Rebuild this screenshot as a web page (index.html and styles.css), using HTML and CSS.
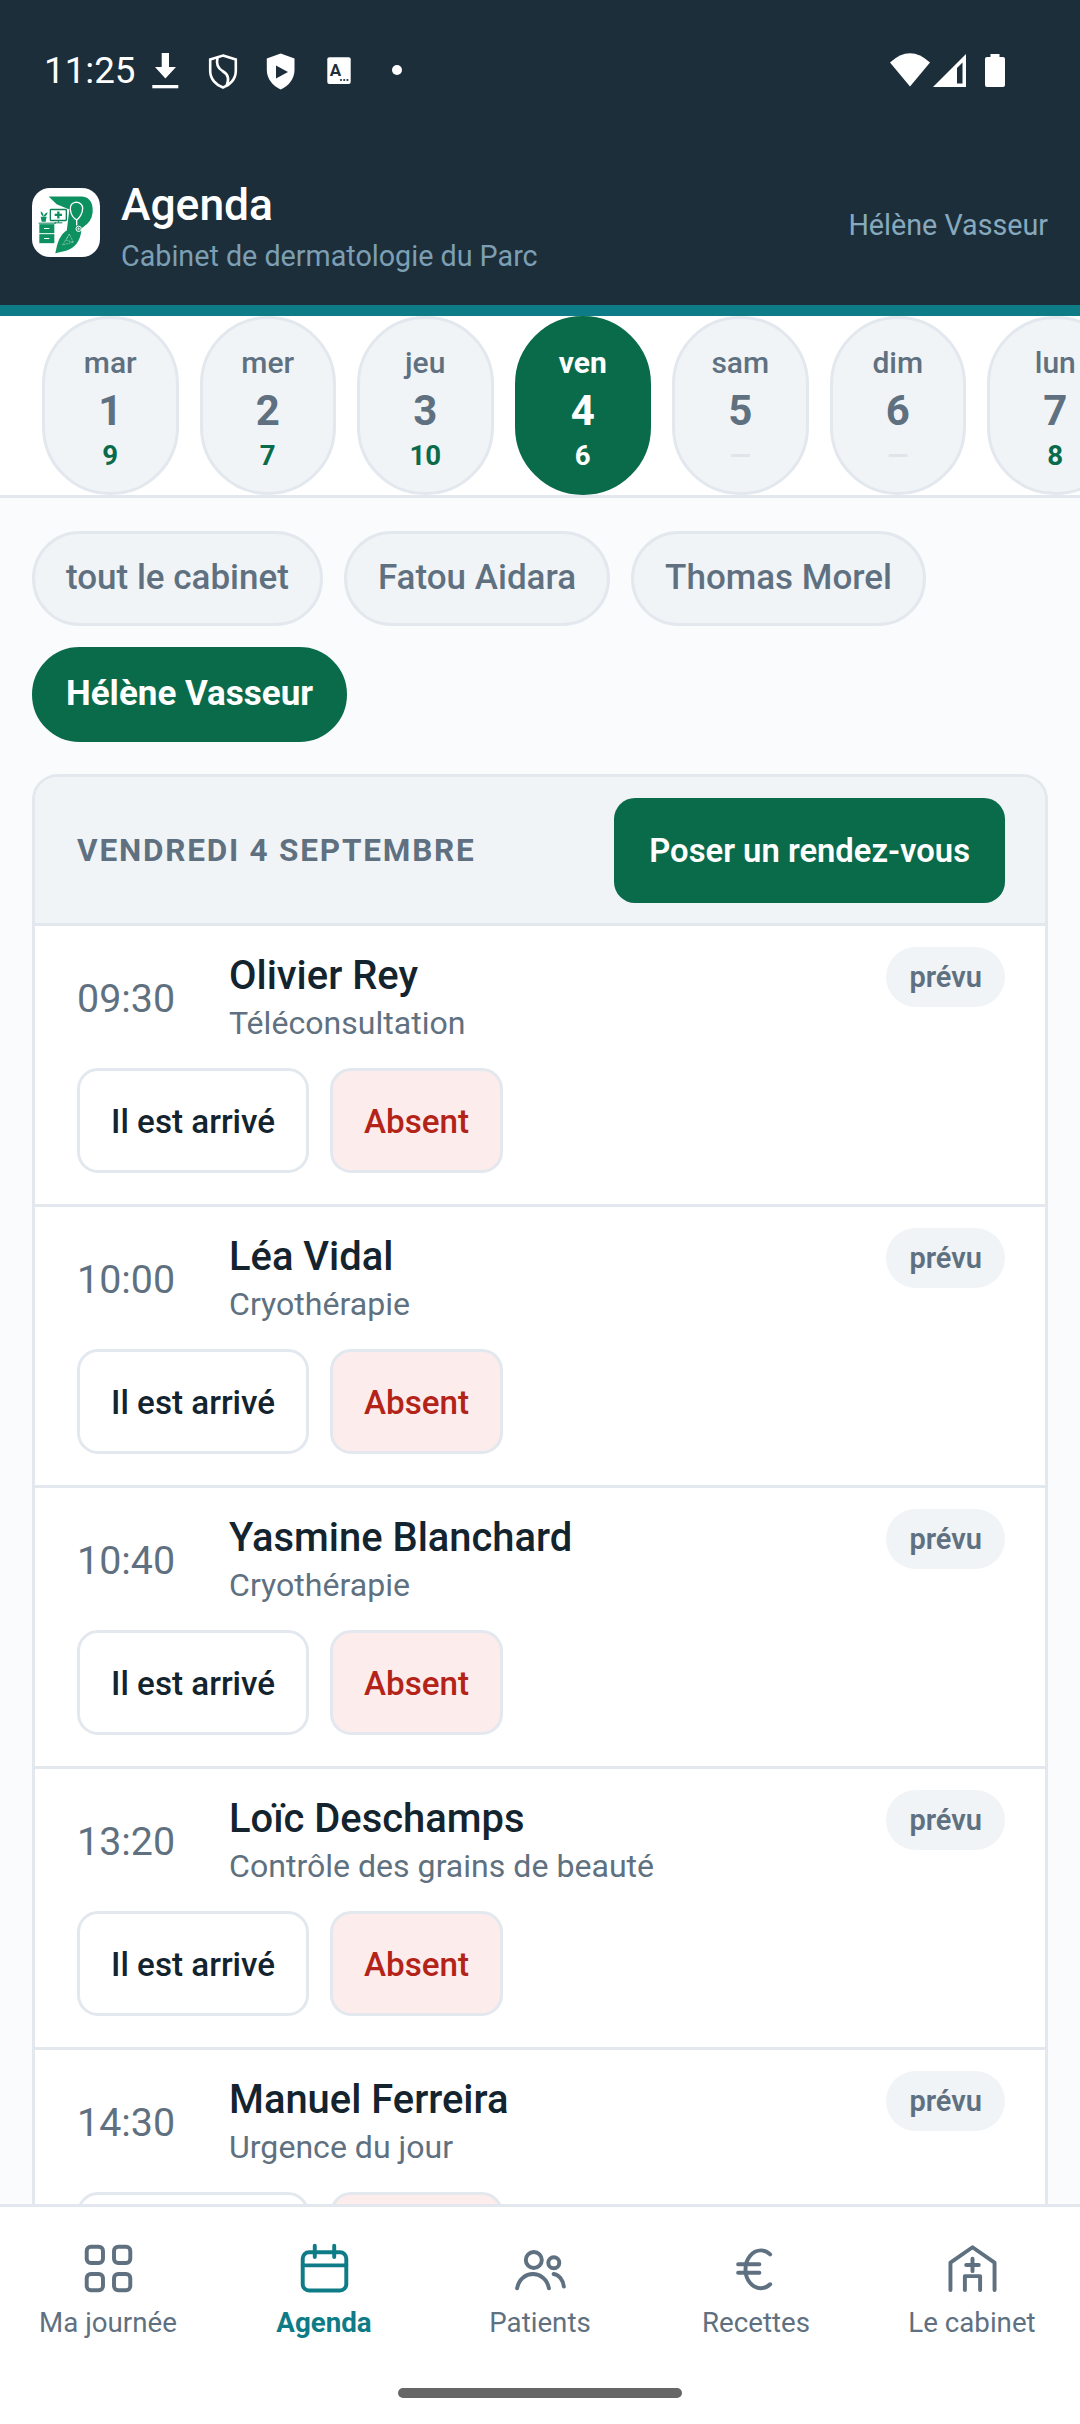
FILE: index.html
```html
<!DOCTYPE html>
<html lang="fr">
<head>
  <meta charset="UTF-8" />
  <meta name="viewport" content="width=device-width, initial-scale=1.0"/>
  <title>Agenda</title>
  <link rel="stylesheet" href="styles.css">
</head>
<body>
  <div class="app">

    <header class="top">
      <div class="status-bar">
        <span class="clock">11:25</span>
        <div class="status-icons">
          <svg class="st" viewBox="0 0 30 40" fill="#fff"><path d="M11.7 3H19V17H26L15.4 28.5 5 17H11.7Z"/><rect x="2.3" y="35" width="26" height="3.3"/></svg>
          <svg class="st" viewBox="0 0 30 40" fill="none" stroke="#fff" stroke-width="2.6"><path d="M15 5.500L27.800 9.500V21C27.800 29 22 35 15 37.500 8 35 2.200 29 2.200 21V9.500Z"/><path d="M9.500 8C8 14 9.500 18 14.500 21 20 24 21.500 29 18.500 36"/></svg>
          <svg class="st" viewBox="0 0 30 40"><path fill="#fff" d="M14.700 3.500L28.500 8.500V20C28.500 29 22.500 36 14.700 39.500 7 36 .8 29 .8 20V8.500Z"/><path fill="#1d2e3b" d="M10 15.500V28.500L22 22Z"/></svg>
          <svg class="st" viewBox="0 0 30 40"><rect x="3.300" y="7.300" width="23.400" height="26.700" rx="2" fill="#fff"/><text x="11.500" y="26" font-family="Roboto" font-weight="700" font-size="17" text-anchor="middle" fill="#1d2e3b">A</text><circle cx="17" cy="30" r="1.100" fill="#1d2e3b"/><circle cx="20.200" cy="30" r="1.100" fill="#1d2e3b"/><circle cx="23.400" cy="30" r="1.100" fill="#1d2e3b"/></svg>
          <svg class="st" viewBox="0 0 30 40"><circle cx="15" cy="20" r="5" fill="#fff"/></svg>
        </div>
        <div class="status-right">
          <svg class="wifi" viewBox="0 0 40 34"><path fill="#fff" d="M0 9.500Q20-9 40 9.500L20 33.500Z"/></svg>
          <svg class="signal" viewBox="0 0 33 33"><path fill="#fff" d="M0 33 33 0V33Z"/><path fill="#1d2e3b" d="M24 14 29.500 8.500V29.500H24Z"/></svg>
          <svg class="battery" viewBox="0 0 20 33"><path fill="#fff" d="M5.500 0H14.500V3H18Q20 3 20 5V31Q20 33 18 33H2Q0 33 0 31V5Q0 3 2 3H5.500Z"/></svg>
        </div>
      </div>
      <div class="app-bar">
        <div class="logo">
          <svg viewBox="38 40 204 206">
            <path fill="#0e9160" d="M88 65H188Q222 68 220 112 218 140 190 158L176 170H142L150 104 112 88Z"/>
            <path fill="#0e9160" d="M108 235Q116 184 140 168H186Q180 216 140 228Z"/>
            <rect x="60" y="148" width="45" height="27" fill="#0e9160"/>
            <rect x="60" y="178" width="45" height="27" fill="#0e9160"/>
            <path stroke="#fff" stroke-width="3" d="M74 161H90M74 191H90"/>
            <rect x="93" y="104" width="48" height="33" rx="2" fill="#fff" stroke="#0e8058" stroke-width="4"/>
            <path stroke="#0e9160" stroke-width="7" d="M117 110V131M106 120H128"/>
            <path stroke="#0e8058" stroke-width="3" d="M117 137V143M105 144H129M58 145H110"/>
            <path fill="#0e9160" d="M64 126H82L79 141H67Z"/>
            <path fill="#0e9160" d="M73 126C66 122 64 116 64 109 70 112 73 118 73 126ZM73 126C74 118 78 114 85 112 84 119 80 124 73 126Z"/>
            <path fill="#0e9160" stroke="#fff" stroke-width="4" d="M170 82C158 84 152 92 153 104 155 122 166 132 172 135 180 130 190 116 190 100 190 90 182 82 170 82Z"/>
            <path stroke="#fff" stroke-width="4" fill="none" d="M172 135V152"/>
            <circle cx="178" cy="162" r="8" fill="#0e9160" stroke="#fff" stroke-width="3"/>
            <path stroke="#fff" stroke-width="2" d="M178 157V167M173 162H183"/>
            <path stroke="#fff" stroke-width="1.500" fill="none" stroke-dasharray="3 2" d="M130 210 150 178 162 202 130 210M150 178 140 196 162 202"/>
          </svg>
        </div>
        <div class="brand">
          <div class="brand-title">Agenda</div>
          <div class="brand-sub">Cabinet de dermatologie du Parc</div>
        </div>
        <div class="user-name">Hélène Vasseur</div>
      </div>
    </header>

    <nav class="date-strip">
      <div class="date-pill"><span class="d-label">mar</span><span class="d-num">1</span><span class="d-count">9</span></div>
      <div class="date-pill"><span class="d-label">mer</span><span class="d-num">2</span><span class="d-count">7</span></div>
      <div class="date-pill"><span class="d-label">jeu</span><span class="d-num">3</span><span class="d-count">10</span></div>
      <div class="date-pill active"><span class="d-label">ven</span><span class="d-num">4</span><span class="d-count">6</span></div>
      <div class="date-pill"><span class="d-label">sam</span><span class="d-num">5</span><span class="d-count none">—</span></div>
      <div class="date-pill"><span class="d-label">dim</span><span class="d-num">6</span><span class="d-count none">—</span></div>
      <div class="date-pill"><span class="d-label">lun</span><span class="d-num">7</span><span class="d-count">8</span></div>
    </nav>

    <main class="content">
      <div class="chips">
        <button class="chip">tout le cabinet</button>
        <button class="chip">Fatou Aidara</button>
        <button class="chip">Thomas Morel</button>
        <button class="chip active">Hélène Vasseur</button>
      </div>

      <section class="day-card">
        <div class="day-head">
          <span class="day-title">VENDREDI 4 SEPTEMBRE</span>
          <button class="btn-book">Poser un rendez-vous</button>
        </div>

        <div class="appt">
          <div class="appt-top">
            <span class="appt-time">09:30</span>
            <div class="appt-info"><div class="appt-name">Olivier Rey</div><div class="appt-type">Téléconsultation</div></div>
            <span class="appt-status">prévu</span>
          </div>
          <div class="appt-actions"><button class="btn-arrived">Il est arrivé</button><button class="btn-absent">Absent</button></div>
        </div>

        <div class="appt">
          <div class="appt-top">
            <span class="appt-time">10:00</span>
            <div class="appt-info"><div class="appt-name">Léa Vidal</div><div class="appt-type">Cryothérapie</div></div>
            <span class="appt-status">prévu</span>
          </div>
          <div class="appt-actions"><button class="btn-arrived">Il est arrivé</button><button class="btn-absent">Absent</button></div>
        </div>

        <div class="appt">
          <div class="appt-top">
            <span class="appt-time">10:40</span>
            <div class="appt-info"><div class="appt-name">Yasmine Blanchard</div><div class="appt-type">Cryothérapie</div></div>
            <span class="appt-status">prévu</span>
          </div>
          <div class="appt-actions"><button class="btn-arrived">Il est arrivé</button><button class="btn-absent">Absent</button></div>
        </div>

        <div class="appt">
          <div class="appt-top">
            <span class="appt-time">13:20</span>
            <div class="appt-info"><div class="appt-name">Loïc Deschamps</div><div class="appt-type">Contrôle des grains de beauté</div></div>
            <span class="appt-status">prévu</span>
          </div>
          <div class="appt-actions"><button class="btn-arrived">Il est arrivé</button><button class="btn-absent">Absent</button></div>
        </div>

        <div class="appt">
          <div class="appt-top">
            <span class="appt-time">14:30</span>
            <div class="appt-info"><div class="appt-name">Manuel Ferreira</div><div class="appt-type">Urgence du jour</div></div>
            <span class="appt-status">prévu</span>
          </div>
          <div class="appt-actions"><button class="btn-arrived">Il est arrivé</button><button class="btn-absent">Absent</button></div>
        </div>
      </section>
    </main>

    <footer class="tabs">
      <div class="tab-row">
        <div class="tab">
          <svg class="tab-icon" viewBox="0 0 24 24"><rect x="3.700" y="3.700" width="6.200" height="6.200" rx="1.600"/><rect x="14.100" y="3.700" width="6.200" height="6.200" rx="1.600"/><rect x="3.700" y="14.100" width="6.200" height="6.200" rx="1.600"/><rect x="14.100" y="14.100" width="6.200" height="6.200" rx="1.600"/></svg>
          <span>Ma journée</span>
        </div>
        <div class="tab active">
          <svg class="tab-icon" viewBox="0 0 24 24"><rect x="3.700" y="5.800" width="16.600" height="14.600" rx="2.400"/><path d="M8.300 3.300V7.600M15.700 3.300V7.600M3.700 10.800H20.300"/></svg>
          <span>Agenda</span>
        </div>
        <div class="tab">
          <svg class="tab-icon" viewBox="0 0 24 24"><circle cx="9.450" cy="8.760" r="3.050"/><circle cx="17.070" cy="9.800" r="2.100"/><path d="M3.100 19.500C3.700 16 6.400 14.100 9.100 14.100S14.600 16 15.200 19.500M17 14.100C19 14.400 20.600 16.300 20.900 18.900"/></svg>
          <span>Patients</span>
        </div>
        <div class="tab">
          <svg class="tab-icon" viewBox="0 0 24 24"><path d="M17.200 6.600C16.300 5.700 15 5.100 13.700 5.100 10.400 5.100 7.800 8.400 7.800 12.400 7.800 16.400 10.400 19.500 13.700 19.500 15 19.500 16.300 18.900 17.200 18M5 10.400H13.100M5 13.600H13.100"/></svg>
          <span>Recettes</span>
        </div>
        <div class="tab">
          <svg class="tab-icon" viewBox="0 0 24 24"><path d="M3.600 20.200V9.800L12 3.900 20.400 9.800V20.200M12 8.300V13M9.600 10.700H14.400M9.100 20.200V14.900H14.900V20.200"/></svg>
          <span>Le cabinet</span>
        </div>
      </div>
      <div class="home-bar"></div>
    </footer>

  </div>
</body>
</html>
```

FILE: styles.css
```css
* {
  box-sizing: border-box;
}

body {
  margin: 0;
  padding: 0;
  font-family: 'Roboto', sans-serif;
  background: #f9fbfc;
}

button {
  font-family: inherit;
  cursor: pointer;
}

.app {
  display: flex;
  flex-direction: column;
  width: 1080px;
  height: 2424px;
  overflow: hidden;
}

/* top bar */
.top {
  background: #1d2e3b;
  border-bottom: 11px solid #0e7c86;
  height: 316px;
  flex-shrink: 0;
}

.status-bar {
  display: flex;
  align-items: center;
  height: 140px;
  padding: 0 75px 0 44px;
  color: #fff;
}

.clock {
  font-size: 36.75px;
  margin-right: 15px;
  width: 91px;
}

.status-icons {
  display: flex;
  gap: 28px;
}

.st {
  width: 30px;
  height: 40px;
}

.status-right {
  display: flex;
  align-items: center;
  margin-left: auto;
}

.wifi {
  width: 40px;
  height: 34px;
  margin-right: 3px;
}

.signal {
  width: 33px;
  height: 33px;
  margin-right: 19px;
}

.battery {
  width: 20px;
  height: 33px;
}

.app-bar {
  display: flex;
  align-items: center;
  height: 165px;
  padding: 0 32px;
}

.logo {
  width: 68px;
  height: 69px;
  background: #fff;
  border-radius: 18px;
  overflow: hidden;
  margin-right: 21px;
  flex-shrink: 0;
}

.logo svg {
  display: block;
  width: 100%;
  height: 100%;
}

.brand {
  padding-top: 7px;
}

.brand-title {
  font-size: 44.4px;
  font-weight: 500;
  color: #fff;
}

.brand-sub {
  font-size: 28.7px;
  color: #7c9fb3;
  margin-top: 7.5px;
}

.user-name {
  margin-left: auto;
  font-size: 28.7px;
  color: #86a9bd;
  padding-top: 4px;
}

/* date strip */
.date-strip {
  display: flex;
  gap: 21px;
  flex-shrink: 0;
  height: 182px;
  padding: 0 0 0 42px;
  background: #fff;
  border-bottom: 3px solid #e2e8ee;
  overflow: hidden;
}

.date-pill {
  display: flex;
  flex-direction: column;
  align-items: center;
  flex: 0 0 136.5px;
  height: 179px;
  padding-top: 25.5px;
  background: #f1f4f7;
  border: 3px solid #e2e8ee;
  border-radius: 68px;
  color: #5f7180;
}

.d-label {
  font-size: 30px;
  font-weight: 500;
}

.d-num {
  font-size: 42px;
  font-weight: 700;
  margin-top: 6.5px;
}

.d-count {
  font-size: 27.6px;
  font-weight: 700;
  margin-top: 3.5px;
  color: #0a6b4a;
}

.d-count.none {
  color: #dfe5ea;
}

.date-pill.active {
  background: #0a6b4a;
  border-color: #0a6b4a;
  color: #fff;
}

.date-pill.active .d-label {
  font-weight: 700;
}

.date-pill.active .d-count {
  color: #fff;
}

/* chips */
.content {
  flex: 1;
  min-height: 0;
  overflow: hidden;
  padding: 33px 32px 0;
}

.chips {
  display: flex;
  flex-wrap: wrap;
  gap: 21px;
  margin-bottom: 32px;
}

.chip {
  height: 95px;
  padding: 0 31px 2px;
  font-size: 35px;
  font-weight: 500;
  color: #5f7180;
  background: #f1f4f7;
  border: 3px solid #e2e8ee;
  border-radius: 48px;
}

.chip.active {
  font-weight: 700;
  color: #fff;
  background: #0a6b4a;
  border-color: #0a6b4a;
}

/* day card */
.day-card {
  background: #fff;
  border: 3px solid #e2e8ee;
  border-radius: 26px;
  overflow: hidden;
}

.day-head {
  display: flex;
  align-items: center;
  justify-content: space-between;
  padding: 21px 40px 20px 42px;
  background: #f1f4f7;
  border-bottom: 3px solid #e2e8ee;
}

.day-title {
  font-size: 31.5px;
  font-weight: 700;
  letter-spacing: 1.8px;
  color: #5f7180;
}

.btn-book {
  height: 105px;
  padding: 0 35px;
  font-size: 32.8px;
  font-weight: 600;
  color: #fff;
  background: #0a6b4a;
  border: none;
  border-radius: 21px;
}

.appt {
  padding: 21px 40px 31px 42px;
  border-bottom: 3px solid #e2e8ee;
}

.appt-top {
  display: flex;
  align-items: center;
  min-height: 100px;
}

.appt-time {
  flex: 0 0 152px;
  font-size: 39.4px;
  padding-top: 2px;
  color: #5f7180;
}

.appt-info {
  flex: 1;
  min-width: 0;
}

.appt-name {
  font-size: 39.9px;
  font-weight: 500;
  color: #14242f;
}

.appt-type {
  font-size: 32.1px;
  color: #5f7180;
  margin-top: 5px;
}

.appt-status {
  align-self: flex-start;
  padding: 0 23px;
  height: 60px;
  line-height: 60px;
  font-size: 29px;
  font-weight: 600;
  color: #5f7180;
  background: #f1f4f7;
  border-radius: 30px;
}

.appt-actions {
  display: flex;
  gap: 21px;
  margin-top: 21px;
}

.btn-arrived,
.btn-absent {
  height: 105px;
  padding: 2px 31px 0;
  font-size: 33.2px;
  font-weight: 500;
  border: 3px solid #e2e8ee;
  border-radius: 21px;
}

.btn-arrived {
  color: #14242f;
  background: #fff;
}

.btn-absent {
  color: #b42318;
  background: #fcecec;
}

/* bottom tabs */
.tabs {
  flex-shrink: 0;
  height: 220px;
  background: #fff;
  border-top: 3px solid #e2e8ee;
}

.tab-row {
  display: flex;
  padding-top: 30px;
}

.tab {
  display: flex;
  flex-direction: column;
  align-items: center;
  flex: 1;
  font-size: 27.7px;
  color: #5f7180;
}

.tab span {
  margin-top: 6px;
}

.tab-icon {
  display: block;
  width: 63px;
  height: 63px;
  fill: none;
  stroke: #5f7180;
  stroke-width: 1.5;
  stroke-linecap: round;
  stroke-linejoin: round;
}

.tab.active {
  color: #0e7c86;
  font-weight: 700;
}

.tab.active .tab-icon {
  stroke: #0e7c86;
}

.home-bar {
  width: 284px;
  height: 10px;
  margin: 49px auto 0;
  background: #666;
  border-radius: 5px;
}
```
